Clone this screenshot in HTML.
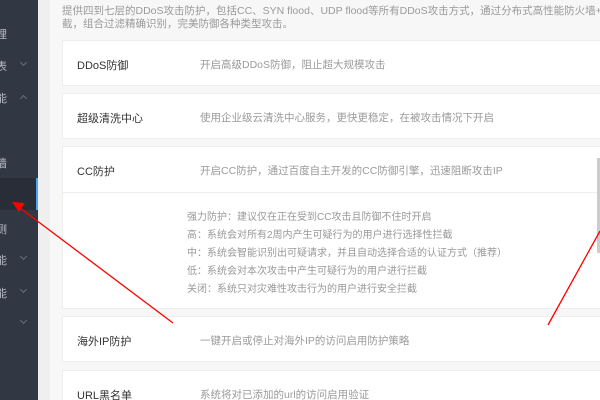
<!DOCTYPE html>
<html><head><meta charset="utf-8"><style>
*{margin:0;padding:0;box-sizing:border-box}
html,body{width:600px;height:400px;overflow:hidden}
body{background:#f7f7f7;font-family:"Liberation Sans","Noto Sans CJK SC",sans-serif;position:relative}
.sb{position:absolute;left:0;top:0;width:38px;height:400px;background:#323744;overflow:hidden}
.sb .hl{position:absolute;left:0;top:178px;width:38px;height:32px;background:#282d37;border-right:2px solid #4aa6f5}
.sb span{position:absolute;left:-4px;font-size:11px;color:#b8bcc6;white-space:nowrap}
.sb i{position:absolute;left:21px;width:5px;height:5px;border-right:1px solid #6a6f7b;border-bottom:1px solid #6a6f7b;transform:rotate(45deg)}
.sb i.up{transform:rotate(225deg)}
.strip{position:absolute;left:38px;top:0;width:12px;height:400px;background:#efefef}
.intro{position:absolute;left:62px;top:5px;width:538px;overflow:hidden;font-size:10.5px;color:#9a9a9a;line-height:13px;white-space:nowrap}
.card{position:absolute;left:62px;width:538px;background:#fff;border:1px solid #eee;border-right:none;overflow:hidden}
.t{position:absolute;left:14px;font-size:11px;color:#333;white-space:nowrap}
.d{position:absolute;left:137px;font-size:10.5px;color:#9a9a9a;white-space:nowrap}
.sub{position:absolute;left:0;top:45px;width:538px;border-top:1px solid #eee}
.sub p{position:absolute;left:124px;font-size:10px;color:#999;white-space:nowrap}
</style></head><body>
<div class="sb">
<div class="hl"></div>
<span style="top:26px">理</span>
<span style="top:58px">表</span><i style="top:60px"></i>
<span style="top:90px">能</span><i class="up" style="top:96px"></i>
<span style="top:155px">墙</span>
<span style="top:221px">测</span>
<span style="top:252px">能</span><i style="top:254px"></i>
<span style="top:285px">能</span><i style="top:287px"></i>
<i style="top:318px"></i>
</div>
<div class="strip"></div>
<div class="intro">提供四到七层的DDoS攻击防护，包括CC、SYN flood、UDP flood等所有DDoS攻击方式，通过分布式高性能防火墙+精准流量清洗+CC防御<br>截，组合过滤精确识别，完美防御各种类型攻击。</div>
<div class="card" style="top:40px;height:46px"><div class="t" style="top:16px">DDoS防御</div><div class="d" style="top:16px">开启高级DDoS防御，阻止超大规模攻击</div></div>
<div class="card" style="top:93px;height:46px"><div class="t" style="top:16px">超级清洗中心</div><div class="d" style="top:16px">使用企业级云清洗中心服务，更快更稳定，在被攻击情况下开启</div></div>
<div class="card" style="top:146px;height:163px"><div class="t" style="top:16px">CC防护</div><div class="d" style="top:16px">开启CC防护，通过百度自主开发的CC防御引擎，迅速阻断攻击IP</div>
<div class="sub">
<p style="top:15px">强力防护：建议仅在正在受到CC攻击且防御不住时开启</p>
<p style="top:33px">高：系统会对所有2周内产生可疑行为的用户进行选择性拦截</p>
<p style="top:51px">中：系统会智能识别出可疑请求，并且自动选择合适的认证方式（推荐）</p>
<p style="top:69px">低：系统会对本次攻击中产生可疑行为的用户进行拦截</p>
<p style="top:87px">关闭：系统只对灾难性攻击行为的用户进行安全拦截</p>
</div></div>
<div class="card" style="top:316px;height:46px"><div class="t" style="top:16px">海外IP防护</div><div class="d" style="top:16px">一键开启或停止对海外IP的访问启用防护策略</div></div>
<div class="card" style="top:370px;height:30px;border-bottom:none"><div class="t" style="top:16px">URL黑名单</div><div class="d" style="top:16px">系统将对已添加的url的访问启用验证</div></div>
<div style="position:absolute;left:597px;top:158px;width:3px;height:95px;background:#ccc"></div>
<svg style="position:absolute;left:0;top:0" width="600" height="400">
<line x1="173" y1="323" x2="20" y2="208" stroke="#f00" stroke-width="1.3"/>
<polygon points="12,202 25,203 19,212" fill="#f00"/>
<line x1="548" y1="325" x2="600" y2="231" stroke="#f00" stroke-width="1.3"/>
</svg>
</body></html>
